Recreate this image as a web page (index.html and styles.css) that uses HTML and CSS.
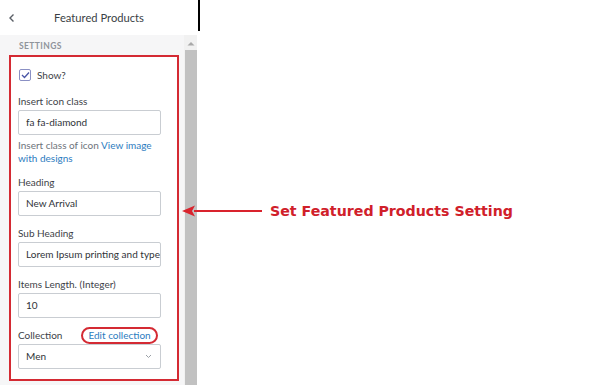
FILE: index.html
```html
<!DOCTYPE html>
<html>
<head>
<meta charset="utf-8">
<link rel="stylesheet" href="styles.css">
</head>
<body>
<div class="page">
  <div class="sidebar">
    <div class="header">
      <div class="header-inner">
        <svg class="back" width="8" height="10" viewBox="0 0 8 10"><path d="M5.5 1.5 L2 5 L5.5 8.5" fill="none" stroke="#5a5f66" stroke-width="1.4"/></svg>
        <div class="title">Featured Products</div>
      </div>
    </div>
    <div class="body">
      <div class="panel">
        <div class="section-title">SETTINGS</div>
        <div class="box">
          <div class="check-row">
            <span class="checkbox"><svg width="9" height="8" viewBox="0 0 9 8"><path d="M1 4 L3.5 6.5 L8 1.5" fill="none" stroke="#4a56a6" stroke-width="1.3"/></svg></span>
            <span>Show?</span>
          </div>
          <div class="field">
            <div class="label">Insert icon class</div>
            <div class="input">fa fa-diamond</div>
            <div class="help">Insert class of icon <span class="link">View image with designs</span></div>
          </div>
          <div class="field">
            <div class="label">Heading</div>
            <div class="input">New Arrival</div>
          </div>
          <div class="field">
            <div class="label">Sub Heading</div>
            <div class="input">Lorem Ipsum printing and type</div>
          </div>
          <div class="field">
            <div class="label">Items Length. (Integer)</div>
            <div class="input">10</div>
          </div>
          <div class="field last">
            <div class="label label-row"><span>Collection</span><span class="circled link">Edit collection</span></div>
            <div class="input select"><span>Men</span><svg width="7" height="5" viewBox="0 0 7 5"><path d="M1 1 L3.5 3.5 L6 1" fill="none" stroke="#9aa0a6" stroke-width="1"/></svg></div>
          </div>
        </div>
      </div>
      <div class="scrollbar">
        <svg class="up" width="8" height="5" viewBox="0 0 8 5"><path d="M0.5 4.5 L4 1 L7.5 4.5 Z" fill="#a9a9a9"/></svg>
        <div class="thumb"></div>
      </div>
    </div>
  </div>
  <div class="annotation">
    <svg class="arrow" width="82" height="14" viewBox="0 0 82 14"><path d="M12 7 L80 7" stroke="#d9232d" stroke-width="2"/><path d="M0 7 L13 1.5 L10 7 L13 12.5 Z" fill="#d9232d"/></svg>
    <span class="note">Set Featured Products Setting</span>
  </div>
</div>
</body>
</html>
```
FILE: styles.css
```css
html, body {
  margin: 0;
  padding: 0;
  background: #ffffff;
}
.page {
  position: relative;
  width: 604px;
  height: 385px;
  overflow: hidden;
  font-family: Lato, "Open Sans", sans-serif;
  font-size: 10px;
  color: #3d4248;
}
.sidebar {
  width: 200px;
  height: 385px;
  display: flex;
  flex-direction: column;
}
.header {
  height: 35px;
  flex: none;
}
.header-inner {
  width: 198px;
  height: 31px;
  border-right: 2px solid #000;
  display: flex;
  align-items: center;
}
.back {
  margin-left: 8px;
  margin-top: 5px;
}
.title {
  flex: 1;
  text-align: center;
  font-size: 11.2px;
  color: #3a3f45;
  margin-right: 16px;
  margin-top: 4px;
}
.body {
  flex: 1;
  display: flex;
  background: #f6f6f7;
  width: 197px;
}
.panel {
  width: 184px;
  padding-left: 9px;
  box-sizing: border-box;
}
.section-title {
  font-size: 8.5px;
  font-weight: bold;
  letter-spacing: 0.4px;
  color: #8f949b;
  padding-left: 10px;
  height: 20px;
  line-height: 22px;
}
.box {
  width: 170px;
  box-sizing: border-box;
  border: 2px solid #d42a33;
  background: #ffffff;
  padding: 10px 16px 10px 7px;
}
.check-row {
  height: 16px;
  display: flex;
  align-items: center;
  gap: 6px;
  margin-bottom: 10px;
}
.checkbox {
  width: 10px;
  height: 10px;
  border: 1px solid #8a90c4;
  border-radius: 2px;
  display: flex;
  align-items: center;
  justify-content: center;
  margin-left: 1px;
}
.field {
  margin-bottom: 9px;
}
.field.last {
  margin-bottom: 0;
}
.label {
  height: 16px;
  line-height: 16px;
  margin-bottom: 1px;
}
.label-row {
  display: flex;
  align-items: center;
  gap: 19px;
  white-space: nowrap;
}
.input {
  height: 25px;
  box-sizing: border-box;
  border: 1px solid #c9cdd2;
  border-radius: 2px;
  padding-left: 7px;
  line-height: 23px;
  color: #2f3338;
  white-space: nowrap;
  overflow: hidden;
}
.select {
  display: flex;
  align-items: center;
  justify-content: space-between;
  padding-right: 8px;
}
.help {
  margin-top: 4px;
  line-height: 13px;
  color: #6d737a;
}
.link {
  color: #2c7cc0;
}
.circled {
  border: 2px solid #d42a33;
  border-radius: 9px;
  padding: 0 5px;
  line-height: 13px;
}
.scrollbar {
  width: 13px;
  display: flex;
  flex-direction: column;
  align-items: center;
  background: #f1f1f1;
}
.up {
  margin-top: 6px;
  margin-bottom: 4px;
}
.thumb {
  flex: 1;
  width: 12px;
  background: #c1c1c1;
}
.annotation {
  position: absolute;
  left: 182px;
  top: 203px;
  display: flex;
  align-items: center;
  gap: 6px;
}
.note {
  font-family: "DejaVu Sans", Verdana, sans-serif;
  font-weight: bold;
  font-size: 14.2px;
  color: #d0202a;
}
```
